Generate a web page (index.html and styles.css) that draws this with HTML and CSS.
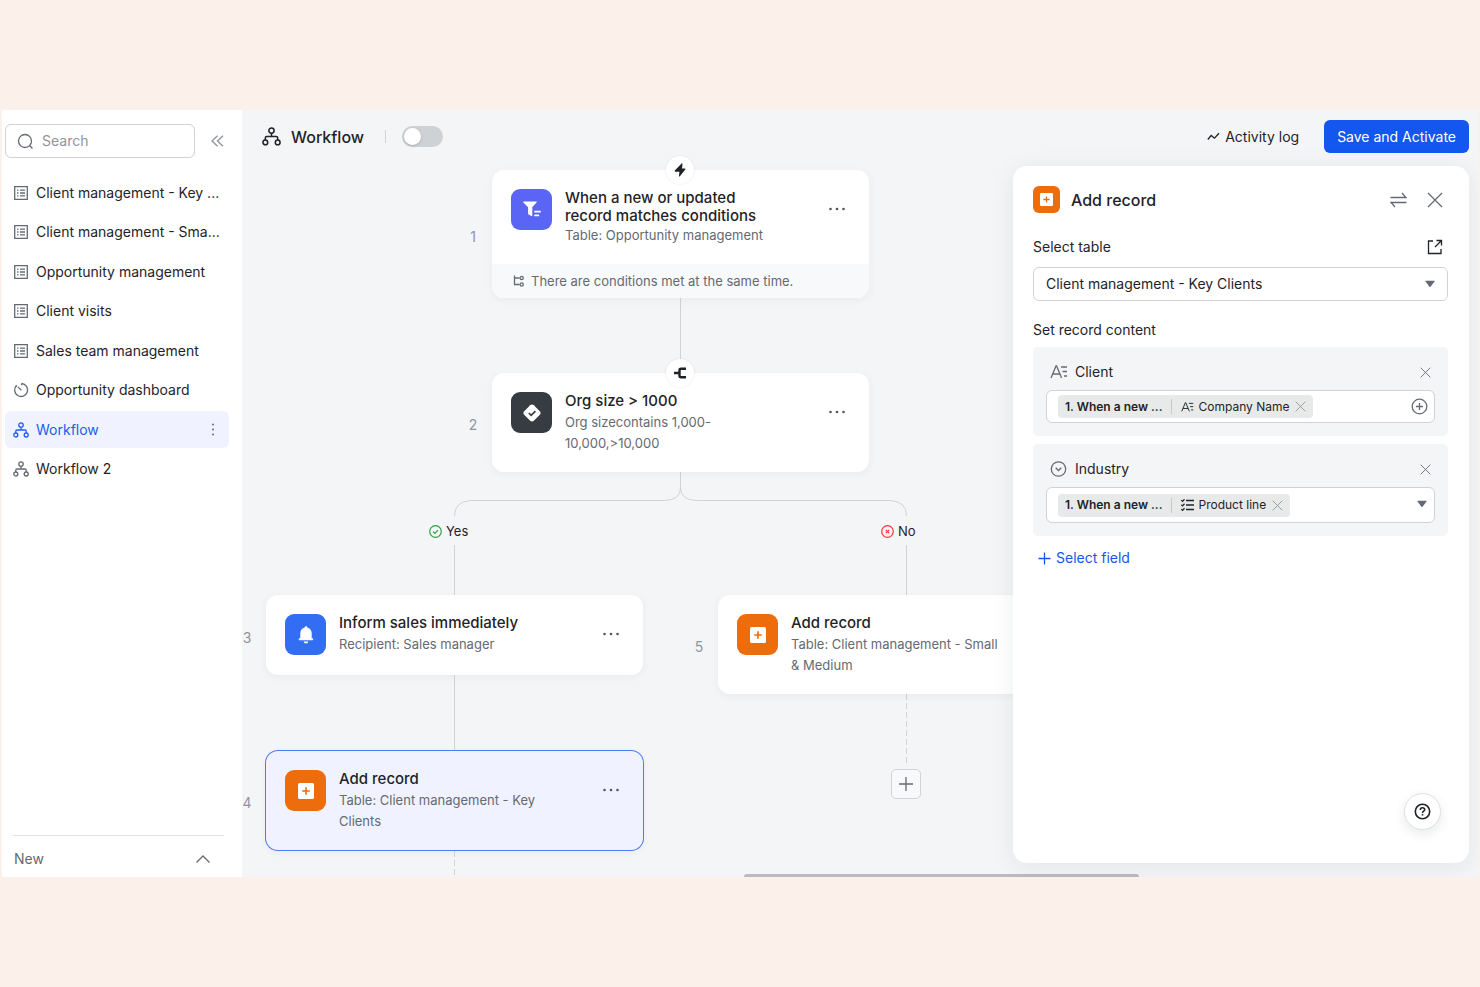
FILE: index.html
```html
<!DOCTYPE html>
<html lang="en">
<head>
<meta charset="utf-8">
<meta name="viewport" content="width=device-width, initial-scale=1">
<title>Workflow</title>
<link rel="stylesheet" href="styles.css">
</head>
<body>
<svg class="sprite" aria-hidden="true">
  <symbol id="i-table" viewBox="0 0 16 16"><path d="M1.700 1.700h12.600v12.600H1.700z"/><path d="M4 5.200h1.400M4 8h1.400M4 10.800h1.400M7 5.200h5M7 8h5M7 10.800h5"/></symbol>
  <symbol id="i-flow" viewBox="0 0 16 16"><circle cx="8" cy="3" r="2.200"/><circle cx="2.800" cy="13" r="2"/><circle cx="13.200" cy="13" r="2"/><path d="M8 5.200V8M2.800 11V9.200Q2.800 8 4 8h8q1.200 0 1.200 1.200V11"/></symbol>
  <symbol id="i-gauge" viewBox="0 0 16 16"><path d="M8.600 1.500A6.500 6.500 0 1 1 3.600 3.300"/><path d="M8.400 8.200 4.900 4.900M8.600 1.500v1.700M2.900 4l.9.900"/></symbol>
  <symbol id="i-add" viewBox="0 0 16 16"><rect width="16" height="16" rx="1.500" fill="#fff" stroke="none"/><path d="M8 4.200v7.600M4.200 8h7.600"/></symbol>
  <symbol id="i-x" viewBox="0 0 16 16"><path d="m1 1 14 14M15 1 1 15"/></symbol>
  <symbol id="i-text" viewBox="0 0 18 16"><path d="M1 14 6 2h.6l5 12M2.800 10h7M11 3h6M12.500 7.500H17M14 12h3"/></symbol>
  <symbol id="i-dots" viewBox="0 0 18 4"><g fill="currentColor" stroke="none"><circle cx="2.500" cy="2" r="1.300"/><circle cx="9" cy="2" r="1.300"/><circle cx="15.500" cy="2" r="1.300"/></g></symbol>
  <symbol id="i-caret" viewBox="0 0 10 8"><path d="M.8.800h8.400q.8 0 .3.700L5.600 6.800q-.6.600-1.200 0L.5 1.500Q0 .800.8.800z" fill="currentColor" stroke="none"/></symbol>
</svg>

<div class="app">
  <aside class="sidebar">
    <div class="search-row">
      <label class="search">
        <svg class="icon" width="17" height="17" viewBox="0 0 17 17"><circle cx="8" cy="8" r="6.500"/><path d="m12.800 12.800 2.700 2.700"/></svg>
        <input type="search" placeholder="Search" aria-label="Search">
      </label>
      <button class="plain collapse" aria-label="Collapse sidebar"><svg class="icon" width="13" height="12" viewBox="0 0 13 12"><path d="M6.500.800 1 6l5.500 5.200M12 .800 6.500 6l5.500 5.200"/></svg></button>
    </div>
    <nav class="nav">
      <a href="#" class="nav-item"><svg class="icon" width="16" height="16"><use href="#i-table"/></svg><span>Client management - Key ...</span></a>
      <a href="#" class="nav-item"><svg class="icon" width="16" height="16"><use href="#i-table"/></svg><span>Client management - Sma...</span></a>
      <a href="#" class="nav-item"><svg class="icon" width="16" height="16"><use href="#i-table"/></svg><span>Opportunity management</span></a>
      <a href="#" class="nav-item"><svg class="icon" width="16" height="16"><use href="#i-table"/></svg><span>Client visits</span></a>
      <a href="#" class="nav-item"><svg class="icon" width="16" height="16"><use href="#i-table"/></svg><span>Sales team management</span></a>
      <a href="#" class="nav-item"><svg class="icon" width="16" height="16"><use href="#i-gauge"/></svg><span>Opportunity dashboard</span></a>
      <div class="nav-item active"><a href="#" class="nav-link" aria-current="page"><svg class="icon" width="16" height="16"><use href="#i-flow"/></svg><span>Workflow</span></a>
        <button class="plain more" aria-label="More"><svg width="4" height="13" viewBox="0 0 4 13" fill="currentColor"><circle cx="2" cy="1.500" r="1"/><circle cx="2" cy="6.500" r="1"/><circle cx="2" cy="11.500" r="1"/></svg></button></div>
      <a href="#" class="nav-item"><svg class="icon" width="16" height="16"><use href="#i-flow"/></svg><span>Workflow 2</span></a>
    </nav>
    <button class="plain new">New<svg class="icon" width="16" height="10" viewBox="0 0 16 10"><path d="m1.500 8.500 6.500-6.500 6.500 6.500"/></svg></button>
  </aside>

  <main class="main">
    <div class="canvas">
      <svg class="wires" width="1237" height="767">
        <path d="M438.500 188V263M438.500 362v16q0 12-16 12.500H228.500q-16 1-16 15.500M438.500 378q0 12 16 12.500h194q16 1 16 15.500M212.500 435v50M664.500 435v50M212.500 565v75"/>
        <path class="dashed" d="M212.500 741v26M664.500 584v71"/>
      </svg>

      <section class="node node-1">
        <span class="num">1</span>
        <div class="card">
          <span class="badge"><svg width="12" height="14" viewBox="0 0 12 14" fill="#1f2329"><path d="M7.600.600c.4-.5 1-.2.900.4L8 5.400h2.700c.7 0 1 .6.600 1.200l-5.400 6.700c-.4.500-1 .2-.9-.4l.4-4.100H1.300C.6 8.800.4 8.100.8 7.600z"/></svg></span>
          <div class="card-body">
            <span class="tile violet"><svg width="18" height="17" viewBox="0 0 18 17" fill="#fff"><path d="M.9.500h12.300c.5 0 .8.500.4.900L9.300 6.100v8.400c0 .7-.4.900-1 .6l-2.700-1.500c-.4-.3-.5-.5-.5-.9V6.200L.4 1.400C.1 1 .3.500.9.500z"/><rect x="11.200" y="9.800" width="6.600" height="1.600" rx=".5"/><rect x="11.200" y="13.600" width="5" height="1.600" rx=".5"/></svg></span>
            <div class="card-text"><h3>When a new or updated record matches conditions</h3><p>Table: Opportunity management</p></div>
            <button class="plain dots" aria-label="More"><svg width="18" height="4"><use href="#i-dots"/></svg></button>
          </div>
          <div class="card-foot"><svg class="icon" width="12" height="12" viewBox="0 0 12 12"><path d="M1.500.500v9h5M1.500 3h5"/><circle cx="8.700" cy="3" r="1.600"/><circle cx="8.700" cy="9.500" r="1.600"/></svg>There are conditions met at the same time.</div>
        </div>
      </section>

      <section class="node node-2">
        <span class="num">2</span>
        <div class="card">
          <span class="badge"><svg class="icon heavy" width="14" height="12" viewBox="0 0 14 12"><path d="M1 6h4.500M13 1.800H8Q6.500 1.800 6.500 3.300v5.400q0 1.500 1.500 1.500h5"/></svg></span>
          <div class="card-body">
            <span class="tile slate"><svg width="18" height="18" viewBox="0 0 18 18"><path d="M7.200 1.200q1.800-1.600 3.600 0l6 6q1.600 1.800 0 3.600l-6 6q-1.800 1.600-3.600 0l-6-6q-1.600-1.800 0-3.600z" fill="#fff"/><path d="m5.800 9 2.400 2.400 4.200-4.200" fill="none" stroke="#373c43" stroke-width="1.700"/></svg></span>
            <div class="card-text"><h3>Org size &gt; 1000</h3><p>Org sizecontains 1,000-<br>10,000,&gt;10,000</p></div>
            <button class="plain dots" aria-label="More"><svg width="18" height="4"><use href="#i-dots"/></svg></button>
          </div>
        </div>
      </section>

      <span class="branch branch-yes"><svg width="13" height="13" viewBox="0 0 13 13" fill="none" stroke="#2f9e44" stroke-width="1.200"><circle cx="6.500" cy="6.500" r="5.800"/><path d="m4 6.600 1.900 1.800L9 5.200"/></svg>Yes</span>
      <span class="branch branch-no"><svg width="13" height="13" viewBox="0 0 13 13" fill="none" stroke="#f0383b" stroke-width="1.200"><circle cx="6.500" cy="6.500" r="5.800"/><path d="m4.800 4.800 3.400 3.400M8.200 4.800 4.800 8.200"/></svg>No</span>

      <section class="node node-3">
        <span class="num">3</span>
        <div class="card">
          <div class="card-body">
            <span class="tile blue"><svg width="16" height="18" viewBox="0 0 16 18" fill="#fff"><path d="M8 .3c.7 0 1.200.5 1.300 1.100 2.700.6 4.400 2.800 4.400 5.600v5.300h.9c.9 0 .9 1.900 0 1.900H1.400c-.9 0-.9-1.900 0-1.900h.9V7c0-2.800 1.700-5 4.400-5.600C6.800.8 7.300.3 8 .3zM5.800 15.500h4.400c0 1.400-1 1.900-2.200 1.900s-2.200-.5-2.200-1.900z"/></svg></span>
            <div class="card-text"><h3>Inform sales immediately</h3><p>Recipient: Sales manager</p></div>
            <button class="plain dots" aria-label="More"><svg width="18" height="4"><use href="#i-dots"/></svg></button>
          </div>
        </div>
      </section>

      <section class="node node-4">
        <span class="num">4</span>
        <div class="card selected">
          <div class="card-body">
            <span class="tile orange"><svg class="icon" width="16" height="16"><use href="#i-add"/></svg></span>
            <div class="card-text"><h3>Add record</h3><p>Table: Client management - Key Clients</p></div>
            <button class="plain dots" aria-label="More"><svg width="18" height="4"><use href="#i-dots"/></svg></button>
          </div>
        </div>
      </section>

      <section class="node node-5">
        <span class="num">5</span>
        <div class="card">
          <div class="card-body">
            <span class="tile orange"><svg class="icon" width="16" height="16"><use href="#i-add"/></svg></span>
            <div class="card-text"><h3>Add record</h3><p>Table: Client management - Small &amp; Medium</p></div>
          </div>
        </div>
      </section>

      <button class="add-step" aria-label="Add step"><svg class="icon" width="14" height="14" viewBox="0 0 14 14"><path d="M7 0v14M0 7h14"/></svg></button>
      <div class="scrollbar"></div>
    </div>

    <header class="topbar">
      <svg class="icon ink" width="19" height="19"><use href="#i-flow"/></svg>
      <h1>Workflow</h1>
      <span class="rule"></span>
      <input type="checkbox" role="switch" class="switch" aria-label="Activate workflow">
      <button class="plain log"><svg class="icon ink" width="13" height="9" viewBox="0 0 13 9"><path d="m.8 7.500 3.400-4 3.300 2.700L12 1.200"/></svg>Activity log</button>
      <button class="save">Save and Activate</button>
    </header>

    <section class="panel">
      <div class="panel-head">
        <span class="tile orange small"><svg class="icon" width="13" height="13"><use href="#i-add"/></svg></span>
        <h2>Add record</h2>
        <button class="plain" aria-label="Replace step"><svg class="icon" width="17" height="16" viewBox="0 0 17 16"><path d="M.5 5.500H16L12 1M16.500 10.500H1L5 15"/></svg></button>
        <button class="plain" aria-label="Close"><svg class="icon" width="16" height="16"><use href="#i-x"/></svg></button>
      </div>
      <div class="label-row">
        <label for="table">Select table</label>
        <button class="plain" aria-label="Open table"><svg class="icon ink" width="16" height="16" viewBox="0 0 16 16"><path d="M6 2H1.500v12.500H14V10M9.500 1.500h5v5M14.500 1.500 8 8"/></svg></button>
      </div>
      <div class="select-wrap">
        <select id="table"><option>Client management - Key Clients</option></select>
        <svg class="caret" width="10" height="8"><use href="#i-caret"/></svg>
      </div>
      <h4>Set record content</h4>
      <div class="group">
        <div class="group-head"><svg class="icon" width="18" height="16"><use href="#i-text"/></svg><label for="client">Client</label><button class="plain" aria-label="Remove Client"><svg class="icon" width="11" height="11"><use href="#i-x"/></svg></button></div>
        <div class="field">
          <span class="chip"><b>1. When a new ...</b><i></i><svg class="icon ink" width="13" height="12"><use href="#i-text"/></svg>Company Name<button class="plain" aria-label="Remove Company Name"><svg class="icon" width="11" height="11"><use href="#i-x"/></svg></button></span>
          <input type="text" id="client">
          <button class="plain" aria-label="Insert reference"><svg class="icon" width="17" height="17" viewBox="0 0 17 17"><circle cx="8.500" cy="8.500" r="7.300"/><path d="M8.500 5v7M5 8.500h7"/></svg></button>
        </div>
      </div>
      <div class="group">
        <div class="group-head"><svg class="icon" width="18" height="16" viewBox="0 0 18 16"><circle cx="8.500" cy="8" r="7.200"/><path d="m5.700 6.800 2.800 2.700 2.800-2.700"/></svg><label for="industry">Industry</label><button class="plain" aria-label="Remove Industry"><svg class="icon" width="11" height="11"><use href="#i-x"/></svg></button></div>
        <div class="field tall">
          <span class="chip"><b>1. When a new ...</b><i></i><svg class="icon ink" width="13" height="12" viewBox="0 0 13 12"><path d="M5 1.500h8M5 6h8M5 10.500h8M.3 1.200l1.200 1.200L3.500.3M.3 5.700l1.200 1.200 2-2.100M.3 10.200l1.200 1.200 2-2.100"/></svg>Product line<button class="plain" aria-label="Remove Product line"><svg class="icon" width="11" height="11"><use href="#i-x"/></svg></button></span>
          <input type="text" id="industry">
          <button class="plain caret-button" aria-label="Open list"><svg width="10" height="8"><use href="#i-caret"/></svg></button>
        </div>
      </div>
      <button class="plain add-field"><svg class="icon" width="13" height="13" viewBox="0 0 13 13"><path d="M6.500.500v12M.5 6.500h12"/></svg>Select field</button>
      <button class="help" aria-label="Help"><svg class="icon ink" width="17" height="17" viewBox="0 0 17 17"><circle cx="8.500" cy="8.500" r="7.200"/><path d="M6.300 6.900c0-1.300 1-2.100 2.200-2.100s2.200.8 2.200 1.900c0 1.500-2.200 1.500-2.200 3.200M8.500 11v1.500"/></svg></button>
    </section>
  </main>
</div>
</body>
</html>
```

FILE: styles.css
```css
* { box-sizing: border-box; }

body {
  margin: 0;
  min-height: 100vh;
  padding: 110px 1px 110px 2px;
  display: flex;
  background: #fcf0eb;
  color: #1f2329;
  font: 14px/20px Inter, "Noto Sans", sans-serif;
}

h1, h2, h3, h4, p { margin: 0; font-weight: 400; }
h4 { font-size: 14px; }
button, input, select { font: inherit; color: inherit; }
a { color: inherit; text-decoration: none; }
.sprite { position: absolute; width: 0; height: 0; }

.plain {
  display: flex;
  align-items: center;
  border: 0;
  padding: 0;
  background: none;
  cursor: pointer;
}

.icon {
  flex: none;
  fill: none;
  stroke: currentColor;
  stroke-width: 1.3;
  color: #646a73;
}
.icon.ink { color: #1f2329; }
.icon.heavy { color: #1f2329; stroke-width: 2.4; }

.app {
  flex: 1;
  display: grid;
  grid-template-columns: 240px 1fr;
  background: #fff;
}

/* Sidebar */
.sidebar {
  display: flex;
  flex-direction: column;
  padding: 14px 13px 0 3px;
}
.search-row { display: flex; align-items: center; gap: 16px; }
.search {
  flex: 1;
  display: flex;
  align-items: center;
  gap: 8px;
  height: 34px;
  max-width: 190px;
  padding: 0 11px;
  border: 1px solid #cfd2d6;
  border-radius: 6px;
}
.search input {
  flex: 1;
  min-width: 0;
  border: 0;
  padding: 0;
  background: none;
  outline: 0;
}
.search input::placeholder { color: #8f959e; opacity: 1; }
.collapse .icon { color: #8f959e; }

.nav {
  display: flex;
  flex-direction: column;
  justify-content: space-between;
  min-height: 314px;
  margin-top: 16px;
}
.nav-item {
  display: flex;
  align-items: center;
  gap: 7px;
  height: 37px;
  padding: 0 0 0 8px;
  border-radius: 6px;
  white-space: nowrap;
}
.nav-link { display: flex; align-items: center; gap: 7px; flex: 1; }
.nav-item.active { background: #f0f3ff; color: #245bf0; }
.nav-item.active .nav-link .icon { color: #245bf0; }
.more { padding: 8px 14px; color: #646a73; }

.new {
  justify-content: space-between;
  height: 42px;
  margin: auto 5px 0 8px;
  padding: 4px 13px 0 1px;
  border-top: 1px solid #dee0e3;
  color: #646a73;
}

/* Workflow area */
.main {
  position: relative;
  display: flex;
  flex-direction: column;
  overflow: hidden;
  background: #f4f5f7;
}
.canvas { position: absolute; inset: 0; overflow: hidden; }
.wires {
  position: absolute;
  inset: 0;
  fill: none;
  stroke: #cfd2d6;
}
.wires .dashed { stroke-dasharray: 6 3; }

.topbar {
  position: relative;
  display: flex;
  align-items: center;
  padding: 10px 10px 13px 20px;
}
.topbar h1 { margin-left: 10px; font-size: 16px; font-weight: 500; }
.rule { width: 1px; height: 13px; margin: 0 16px 0 21px; background: #cfd2d6; }
.switch {
  appearance: none;
  width: 41px;
  height: 21px;
  margin: 0;
  padding: 2px;
  border-radius: 11px;
  background: #cfd2d4;
}
.switch::before {
  content: "";
  display: block;
  width: 17px;
  height: 17px;
  border-radius: 50%;
  background: #fff;
  box-shadow: 0 1px 3px rgba(31, 35, 41, .2);
}
.log { gap: 5px; margin-left: auto; }
.save {
  height: 33px;
  margin-left: 25px;
  padding: 0 13px;
  border: 0;
  border-radius: 6px;
  background: #1456f0;
  color: #fff;
}

/* Nodes */
.node { position: absolute; display: flex; align-items: center; gap: 7px; }
.node-1 { left: 219px; top: 60px; }
.node-2 { left: 219px; top: 263px; }
.node-3 { left: -7px; top: 485px; }
.node-4 { left: -7px; top: 641px; }
.node-5 { left: 445px; top: 485px; }
.num {
  width: 24px;
  padding-top: 5px;
  text-align: center;
  color: #8f959e;
}
.card {
  position: relative;
  width: 377px;
  border-radius: 12px;
  background: #fff;
  box-shadow: 0 2px 8px rgba(31, 35, 41, .05);
}
.card.selected {
  background: #f0f3ff;
  box-shadow: 0 0 0 1px #4a7cf7, 0 2px 8px rgba(31, 35, 41, .05);
}
.card-body { display: flex; padding: 19px 16px 18px 19px; }
.node-3 .card-body { padding-bottom: 20px; }
.card-text { width: 212px; margin-left: 13px; }
.card-text h3 {
  min-height: 20px;
  font-size: 15px;
  line-height: 18px;
  font-weight: 500;
}
.card-text p { font-size: 13px; line-height: 21px; color: #646a73; }
.dots {
  justify-content: center;
  width: 32px;
  height: 40px;
  margin-left: auto;
  color: #51565d;
}
.card-foot {
  display: flex;
  align-items: center;
  gap: 6px;
  height: 34px;
  padding: 0 21px;
  border-radius: 0 0 12px 12px;
  background: #f8f9fa;
  font-size: 13px;
  color: #646a73;
}
.badge {
  position: absolute;
  left: 174px;
  top: -14px;
  display: grid;
  place-items: center;
  width: 28px;
  height: 28px;
  border-radius: 50%;
  background: #fff;
  box-shadow: 0 0 2px rgba(31, 35, 41, .12);
}
.tile {
  flex: none;
  display: grid;
  place-items: center;
  width: 41px;
  height: 41px;
  border-radius: 9px;
}
.tile.small { width: 27px; height: 27px; border-radius: 6px; }
.violet { background: #5b65f5; }
.slate { background: #373c43; }
.blue { background: #336df4; }
.orange { background: #ed6d0c; }
.tile.orange .icon { color: #ed6d0c; stroke-width: 1.6; }

.branch {
  position: absolute;
  top: 411px;
  display: flex;
  align-items: center;
  gap: 4px;
  font-size: 13px;
}
.branch-yes { left: 187px; }
.branch-no { left: 639px; }
.add-step {
  position: absolute;
  left: 649px;
  top: 659px;
  display: grid;
  place-items: center;
  width: 30px;
  height: 30px;
  padding: 0;
  border: 1px solid #cfd2d6;
  border-radius: 5px;
  background: #f8f9fa;
}
.scrollbar {
  position: absolute;
  left: 502px;
  bottom: 0;
  width: 395px;
  height: 3px;
  border-radius: 3px 3px 0 0;
  background: #b9bbbd;
}

/* Settings panel */
.panel {
  position: relative;
  flex: 1;
  align-self: flex-end;
  width: 456px;
  margin: 0 10px 14px 0;
  padding: 20px 21px 20px 20px;
  border-radius: 14px;
  background: #fff;
  box-shadow: 0 4px 24px rgba(31, 35, 41, .08);
}
.panel-head {
  display: flex;
  align-items: center;
  gap: 20px;
  padding-right: 5px;
}
.panel-head h2 {
  margin: 0 auto 0 -9px;
  font-size: 16px;
  font-weight: 500;
}
.label-row {
  display: flex;
  justify-content: space-between;
  margin-top: 24px;
  padding-right: 5px;
}
.select-wrap { position: relative; margin-top: 10px; }
.select-wrap select {
  appearance: none;
  display: block;
  width: 100%;
  height: 34px;
  padding: 0 12px;
  border: 1px solid #cfd2d6;
  border-radius: 6px;
  background: #fff;
}
.caret {
  position: absolute;
  right: 13px;
  top: 13px;
  color: #646a73;
  pointer-events: none;
}
.panel h4 { margin: 19px 0 7px; }
.group {
  margin-bottom: 8px;
  padding: 0 13px 13px;
  border-radius: 5px;
  background: #f4f5f7;
}
.group-head {
  display: flex;
  align-items: center;
  gap: 7px;
  padding: 15px 4px 8px;
}
.group-head .plain { margin-left: auto; }
.field {
  display: flex;
  align-items: center;
  min-height: 33px;
  padding: 0 6px 0 11px;
  border: 1px solid #cfd2d6;
  border-radius: 6px;
  background: #fff;
}
.field.tall { min-height: 36px; }
.field input {
  flex: 1;
  min-width: 0;
  border: 0;
  padding: 0;
  background: none;
  outline: 0;
}
.caret-button { padding: 0 1px 3px 0; color: #646a73; }
.chip {
  display: flex;
  align-items: center;
  height: 23px;
  padding: 0 7px;
  border-radius: 4px;
  background: #e8eaea;
  font-size: 12px;
  white-space: nowrap;
}
.chip b { font-weight: 600; }
.chip i { width: 1px; height: 15px; margin: 0 9px; background: #c4c8cc; }
.chip .ink { margin-right: 4px; }
.chip .plain { margin-left: 6px; }
.chip .plain .icon { color: #8f959e; }
.add-field { gap: 5px; margin: 12px 0 0 5px; color: #1456f0; }
.add-field .icon { color: #1456f0; }
.help {
  position: absolute;
  right: 28px;
  bottom: 33px;
  display: grid;
  place-items: center;
  width: 37px;
  height: 37px;
  padding: 0;
  border: 1px solid #dee0e3;
  border-radius: 50%;
  background: #fff;
  box-shadow: 0 4px 12px rgba(31, 35, 41, .1);
}
.help .icon { stroke-width: 1.6; }
```
